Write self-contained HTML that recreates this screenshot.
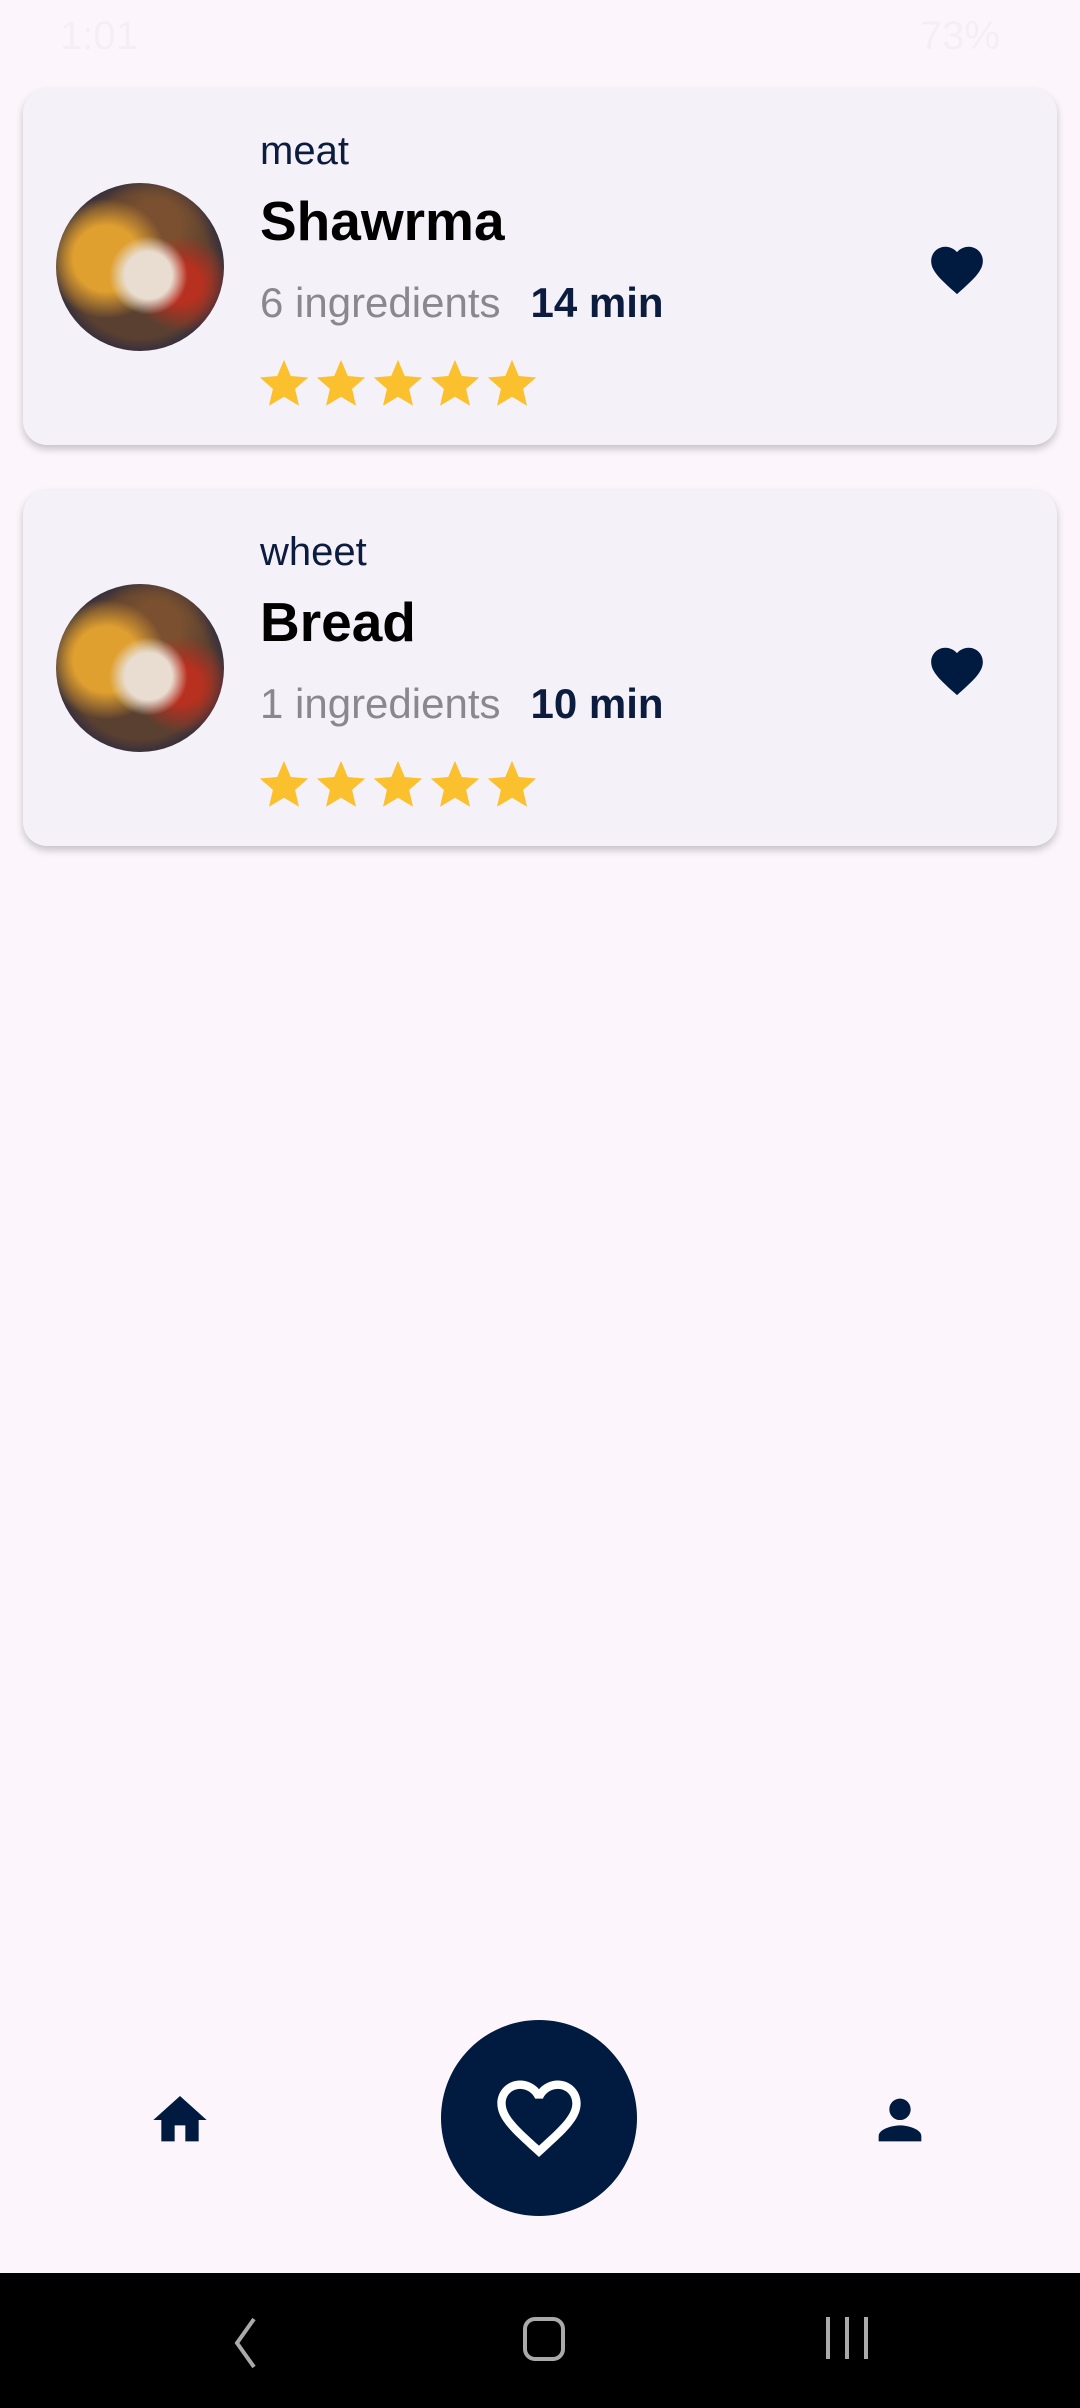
<!DOCTYPE html>
<html><head><meta charset="utf-8"><style>
*{margin:0;padding:0;box-sizing:border-box}
body{width:1080px;height:2408px;background:#fcf6fc;font-family:"Liberation Sans",Roboto,sans-serif;position:relative;overflow:hidden}
.status{position:absolute;top:14px;left:60px;right:40px;height:50px;color:#f6eef6;font-size:40px}
.card{position:absolute;left:23px;width:1034px;height:356px;background:#f5f1f8;border-radius:24px;box-shadow:0 4px 8px rgba(0,0,0,.22)}
.img{position:absolute;left:33px;top:94px;width:168px;height:168px;border-radius:50%;
background:radial-gradient(circle at 55% 55%,#e8ddd0 0 18%,transparent 30%),radial-gradient(circle at 30% 45%,#e0a030 0 22%,transparent 40%),radial-gradient(circle at 75% 60%,#b83020 0 12%,transparent 30%),radial-gradient(circle at 60% 25%,#7a5030 0 15%,transparent 35%),radial-gradient(circle,#5a4030 0 60%,#2a2a40 75%,#8a8070 100%)}
.cat{position:absolute;left:237px;top:40px;font-size:40px;color:#0b1c3e}
.name{position:absolute;left:237px;top:100px;font-size:55px;font-weight:bold;color:#000}
.meta{position:absolute;left:237px;top:190px;font-size:42px;color:#8a888e}
.meta b{color:#0b1c3e;font-weight:bold;margin-left:30px}
.stars{position:absolute;left:232px;top:266px;display:flex;gap:-1px}
.stars svg{margin-right:-1px}
.heart{position:absolute;left:903px;top:150px}
.nav{position:absolute;left:0;top:2273px;width:1080px;height:135px;background:#000}
</style></head><body>
<div class="status"><span>1:01</span><span style="position:absolute;right:40px">73%</span></div>

<div class="card" style="top:89px">
<div class="img"></div>
<div class="cat">meat</div>
<div class="name">Shawrma</div>
<div class="meta">6 ingredients<b>14 min</b></div>
<div class="stars">
<svg width="58" height="58" viewBox="0 0 24 24"><path fill="#fbc02d" d="M12 17.3l6.2 3.7-1.6-7 5.4-4.7-7.2-.6L12 2 9.2 8.7 2 9.3l5.4 4.7-1.6 7z"/></svg><svg width="58" height="58" viewBox="0 0 24 24"><path fill="#fbc02d" d="M12 17.3l6.2 3.7-1.6-7 5.4-4.7-7.2-.6L12 2 9.2 8.7 2 9.3l5.4 4.7-1.6 7z"/></svg><svg width="58" height="58" viewBox="0 0 24 24"><path fill="#fbc02d" d="M12 17.3l6.2 3.7-1.6-7 5.4-4.7-7.2-.6L12 2 9.2 8.7 2 9.3l5.4 4.7-1.6 7z"/></svg><svg width="58" height="58" viewBox="0 0 24 24"><path fill="#fbc02d" d="M12 17.3l6.2 3.7-1.6-7 5.4-4.7-7.2-.6L12 2 9.2 8.7 2 9.3l5.4 4.7-1.6 7z"/></svg><svg width="58" height="58" viewBox="0 0 24 24"><path fill="#fbc02d" d="M12 17.3l6.2 3.7-1.6-7 5.4-4.7-7.2-.6L12 2 9.2 8.7 2 9.3l5.4 4.7-1.6 7z"/></svg>
</div>
<svg class="heart" width="62" height="62" viewBox="0 0 24 24"><path fill="#001a40" d="M12 21.35l-1.45-1.32C5.4 15.36 2 12.28 2 8.5 2 5.42 4.42 3 7.5 3c1.74 0 3.41.81 4.5 2.09C13.09 3.81 14.76 3 16.5 3 19.580 3 22 5.42 22 8.5c0 3.78-3.4 6.86-8.55 11.54z"/></svg>
</div>

<div class="card" style="top:490px">
<div class="img"></div>
<div class="cat">wheet</div>
<div class="name">Bread</div>
<div class="meta">1 ingredients<b>10 min</b></div>
<div class="stars">
<svg width="58" height="58" viewBox="0 0 24 24"><path fill="#fbc02d" d="M12 17.3l6.2 3.7-1.6-7 5.4-4.7-7.2-.6L12 2 9.2 8.7 2 9.3l5.4 4.7-1.6 7z"/></svg><svg width="58" height="58" viewBox="0 0 24 24"><path fill="#fbc02d" d="M12 17.3l6.2 3.7-1.6-7 5.4-4.7-7.2-.6L12 2 9.2 8.7 2 9.3l5.4 4.7-1.6 7z"/></svg><svg width="58" height="58" viewBox="0 0 24 24"><path fill="#fbc02d" d="M12 17.3l6.2 3.7-1.6-7 5.4-4.7-7.2-.6L12 2 9.2 8.7 2 9.3l5.4 4.7-1.6 7z"/></svg><svg width="58" height="58" viewBox="0 0 24 24"><path fill="#fbc02d" d="M12 17.3l6.2 3.7-1.6-7 5.4-4.7-7.2-.6L12 2 9.2 8.7 2 9.3l5.4 4.7-1.6 7z"/></svg><svg width="58" height="58" viewBox="0 0 24 24"><path fill="#fbc02d" d="M12 17.3l6.2 3.7-1.6-7 5.4-4.7-7.2-.6L12 2 9.2 8.7 2 9.3l5.4 4.7-1.6 7z"/></svg>
</div>
<svg class="heart" width="62" height="62" viewBox="0 0 24 24"><path fill="#001a40" d="M12 21.35l-1.45-1.32C5.4 15.36 2 12.28 2 8.5 2 5.42 4.42 3 7.5 3c1.74 0 3.41.81 4.5 2.09C13.09 3.81 14.76 3 16.5 3 19.58 3 22 5.42 22 8.5c0 3.78-3.4 6.86-8.55 11.54z"/></svg>
</div>

<svg style="position:absolute;left:148px;top:2088px" width="64" height="64" viewBox="0 0 24 24"><path fill="#001a40" d="M10 20v-6h4v6h5v-8h3L12 3 2 12h3v8z"/></svg>
<div style="position:absolute;left:441px;top:2020px;width:196px;height:196px;border-radius:50%;background:#001a40"></div>
<svg style="position:absolute;left:489px;top:2068px" width="100" height="100" viewBox="0 0 24 24"><path fill="#fff" d="M16.5 3c-1.74 0-3.41.81-4.5 2.09C10.910 3.81 9.24 3 7.5 3 4.42 3 2 5.42 2 8.5c0 3.78 3.4 6.86 8.55 11.54L12 21.35l1.45-1.32C18.6 15.36 22 12.28 22 8.5 22 5.42 19.58 3 16.5 3zm-4.4 15.55l-.1.1-.1-.1C7.14 14.24 4 11.39 4 8.5 4 6.5 5.5 5 7.5 5c1.54 0 3.04.99 3.57 2.36h1.87C13.46 5.99 14.96 5 16.5 5c2 0 3.5 1.5 3.5 3.5 0 2.89-3.14 5.74-7.9 10.05z"/></svg>
<svg style="position:absolute;left:868px;top:2088px" width="64" height="64" viewBox="0 0 24 24"><path fill="#001a40" d="M12 12c2.21 0 4-1.79 4-4s-1.79-4-4-4-4 1.79-4 4 1.79 4 4 4zm0 2c-2.67 0-8 1.34-8 4v2h16v-2c0-2.660-5.33-4-8-4z"/></svg>

<div class="nav">
<svg style="position:absolute;left:225px;top:42px" width="40" height="56" viewBox="0 0 40 56"><path d="M29 4L12 28l17 24" fill="none" stroke="#aaa" stroke-width="4"/></svg>
<div style="position:absolute;left:523px;top:44px;width:42px;height:44px;border:4px solid #aaa;border-radius:12px"></div>
<div style="position:absolute;left:826px;top:44px;width:4px;height:42px;background:#aaa"></div>
<div style="position:absolute;left:845px;top:44px;width:4px;height:42px;background:#aaa"></div>
<div style="position:absolute;left:864px;top:44px;width:4px;height:42px;background:#aaa"></div>
</div>
</body></html>
